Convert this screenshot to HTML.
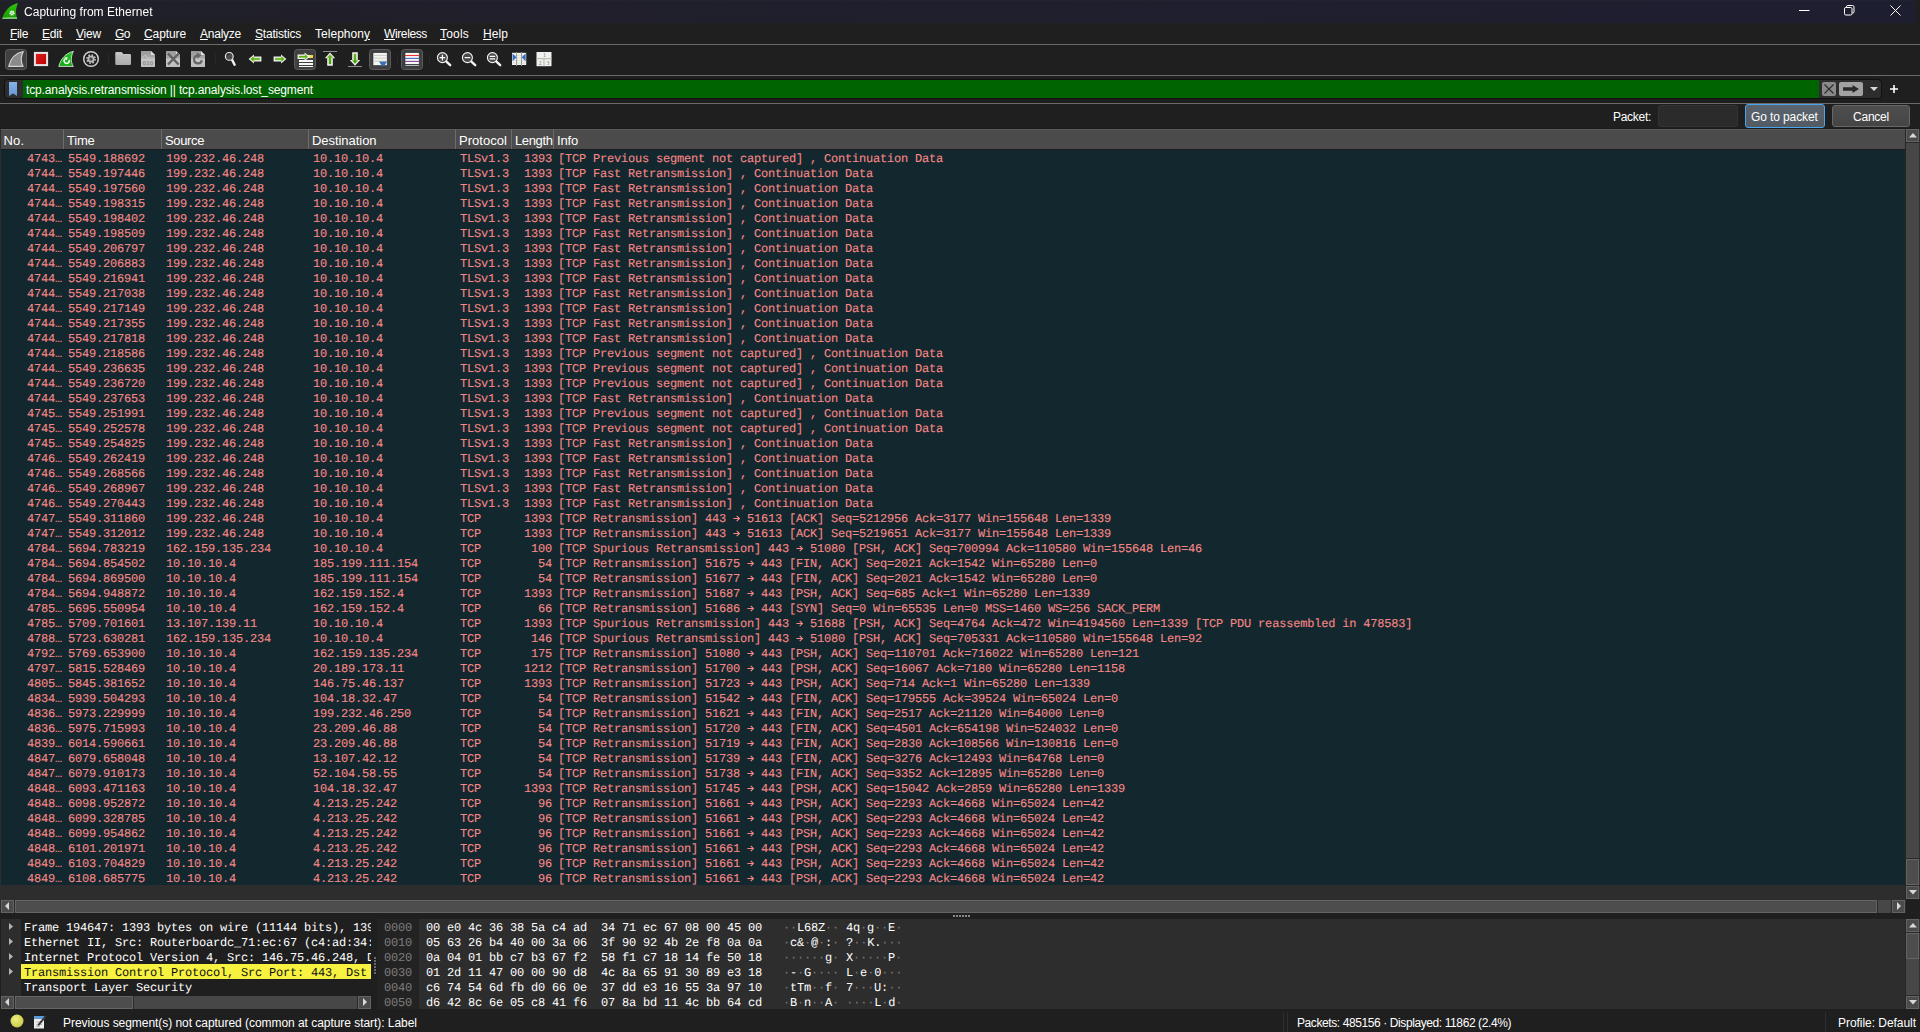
<!DOCTYPE html><html><head><meta charset="utf-8"><title>Capturing from Ethernet</title><style>
html,body{margin:0;padding:0;background:#1f1f1f;}
body{width:1920px;height:1032px;overflow:hidden;position:relative;font-family:"Liberation Sans",sans-serif;}
.b{position:absolute;box-sizing:border-box;}
.t{position:absolute;white-space:pre;font-family:"Liberation Sans",sans-serif;line-height:16px;}
.t u{text-decoration:underline;text-underline-offset:1px;text-decoration-thickness:1px;}
.m{position:absolute;white-space:pre;font-family:"Liberation Mono",monospace;font-size:12px;letter-spacing:-0.2px;line-height:15px;height:15px;text-rendering:geometricPrecision;}
.m b{font-weight:normal;color:#7a7a7a;}
.r{position:absolute;left:1px;width:1905px;height:15px;color:#f78787;}
.r span{-webkit-text-stroke:0.1px #f78787;position:absolute;top:2px;white-space:pre;font-family:"Liberation Mono",monospace;font-size:12px;letter-spacing:-0.2px;line-height:15px;text-rendering:geometricPrecision;}
svg{position:absolute;overflow:visible;}
svg.ar{position:static;display:inline-block;vertical-align:top;}

</style></head><body>
<svg width="0" height="0"><defs><path id="arr" d="M0.4 6.5H6.2M3.7 3.9L6.4 6.5L3.7 9.1" fill="none" stroke="#f78787" stroke-width="1.15"/></defs></svg>
<div class="b" style="left:0px;top:0px;width:1916px;height:23px;background:linear-gradient(90deg,#202027 0%,#201f2b 30%,#1f1f2e 55%,#1e1e31 100%);"></div>
<div class="b" style="left:0px;top:0px;width:1916px;height:1px;background:#23232f;"></div>
<div class="b" style="left:1915px;top:0px;width:1px;height:23px;background:#1f1f26;"></div>
<svg style="left:0;top:0" width="22" height="23" viewBox="0 0 22 23"><defs><linearGradient id="gf" x1="0" y1="0" x2="0" y2="1"><stop offset="0" stop-color="#2ec80e"/><stop offset="0.55" stop-color="#22ac06"/><stop offset="1" stop-color="#1a9a02"/></linearGradient></defs><path d="M2.1 18.9C4.4 11 9.6 5 17.9 3C16 8.2 15.1 12.6 17.3 18.9Z" fill="url(#gf)"/><path d="M2.1 18.9L17.3 18.9L16.8 17.3Q9.5 16.4 2.9 17.6Z" fill="#b6e2b0" opacity="0.6"/><circle cx="12" cy="13" r="2.1" fill="#d6efd2" stroke="#d6efd2" stroke-width="1.4" stroke-dasharray="0.9 0.75"/><circle cx="12" cy="13" r="0.7" fill="#6fc266"/></svg>
<span id="title" class="t" style="left:24px;top:4px;font-size:12px;letter-spacing:0.019px;color:#fff;will-change:transform;">Capturing from Ethernet</span>
<svg style="left:1798px;top:4px" width="104" height="13" viewBox="0 0 104 13" fill="none" stroke="#fff" stroke-width="1"><path d="M1 6.5H11.5"/><rect x="46.5" y="3.5" width="7.5" height="7.5" rx="1.3"/><path d="M48.5 3.5V2.7Q48.5 1.5 49.8 1.5H54.5Q56 1.5 56 3V7.8Q56 9 55 9H54.2"/><path d="M92.5 1.5L102.5 11.5M102.5 1.5L92.5 11.5"/></svg>
<span id="m_File" class="t" style="left:10px;top:26px;font-size:12px;letter-spacing:-0.34px;color:#fff;"><u>F</u>ile</span>
<span id="m_Edit" class="t" style="left:42px;top:26px;font-size:12px;letter-spacing:-0.176px;color:#fff;"><u>E</u>dit</span>
<span id="m_View" class="t" style="left:76px;top:26px;font-size:12px;letter-spacing:-0.203px;color:#fff;"><u>V</u>iew</span>
<span id="m_Go" class="t" style="left:115px;top:26px;font-size:12px;letter-spacing:-0.516px;color:#fff;"><u>G</u>o</span>
<span id="m_Capture" class="t" style="left:144px;top:26px;font-size:12px;letter-spacing:-0.102px;color:#fff;"><u>C</u>apture</span>
<span id="m_Analyze" class="t" style="left:200px;top:26px;font-size:12px;letter-spacing:-0.243px;color:#fff;"><u>A</u>nalyze</span>
<span id="m_Statistics" class="t" style="left:255px;top:26px;font-size:12px;letter-spacing:-0.203px;color:#fff;"><u>S</u>tatistics</span>
<span id="m_Telephony" class="t" style="left:315px;top:26px;font-size:12px;letter-spacing:0.031px;color:#fff;">Telephon<u>y</u></span>
<span id="m_Wireless" class="t" style="left:384px;top:26px;font-size:12px;letter-spacing:-0.377px;color:#fff;"><u>W</u>ireless</span>
<span id="m_Tools" class="t" style="left:440px;top:26px;font-size:12px;letter-spacing:0.194px;color:#fff;"><u>T</u>ools</span>
<span id="m_Help" class="t" style="left:483px;top:26px;font-size:12px;letter-spacing:0.078px;color:#fff;"><u>H</u>elp</span>
<div class="b" style="left:0px;top:44px;width:1920px;height:1px;background:#6a6a6a;"></div>
<div class="b" style="left:0px;top:75px;width:1920px;height:1px;background:#6a6a6a;"></div>
<svg style="left:0;top:45px" width="560" height="30" viewBox="0 45 560 30">
<defs>
<linearGradient id="gr" x1="0" y1="0" x2="1" y2="1"><stop offset="0" stop-color="#e32222"/><stop offset="1" stop-color="#b80000"/></linearGradient>
<linearGradient id="gg" x1="0" y1="0" x2="0" y2="1"><stop offset="0" stop-color="#1fd01f"/><stop offset="1" stop-color="#10a810"/></linearGradient>
<linearGradient id="gfo" x1="0" y1="0" x2="0" y2="1"><stop offset="0" stop-color="#c9c9c9"/><stop offset="1" stop-color="#a9a9a9"/></linearGradient>
<linearGradient id="gfi" x1="0" y1="0" x2="0" y2="1"><stop offset="0" stop-color="#9a9a9a"/><stop offset="0.45" stop-color="#a8a8a8"/><stop offset="0.5" stop-color="#c6c6c6"/><stop offset="1" stop-color="#bdbdbd"/></linearGradient>
<linearGradient id="ga" x1="0" y1="0" x2="0" y2="1"><stop offset="0" stop-color="#6cc21a"/><stop offset="1" stop-color="#3f9a0a"/></linearGradient>
</defs>
<!-- toggled button boxes -->
<g fill="#404040" stroke="#5c5c5c" stroke-width="1">
<rect x="5.5" y="49.5" width="21" height="20" rx="3"/>
<rect x="294.5" y="49.5" width="21" height="20" rx="3"/>
<rect x="369.5" y="49.5" width="21" height="20" rx="3"/>
<rect x="401.5" y="49.5" width="21" height="20" rx="3"/>
</g>
<!-- separators -->
<g stroke="#292929" stroke-width="1"><path d="M108.5 54V65M215.5 54V65M397.5 54V65M429.5 54V65"/></g>
<!-- 1 start capture (grey fin) -->
<path d="M8.7 66.3C10.4 59 15.6 53 23.3 51.5C20.6 56.6 20.3 61.4 23.1 66.3Z" fill="#8a8a8a" stroke="#d4d4d4" stroke-width="1.15" stroke-linejoin="round"/>
<!-- 2 stop -->
<rect x="34.9" y="52.9" width="12.2" height="12.2" fill="url(#gr)" stroke="#e6e6e6" stroke-width="2"/>
<!-- 3 restart (green fin) -->
<path d="M58.8 66.4C60.5 59.2 65.7 53 73.4 51.4C70.7 56.6 70.5 61.6 73.3 66.4Z" fill="url(#gg)" stroke="#dcdcdc" stroke-width="0.9" stroke-linejoin="round"/>
<path d="M69 60A2.5 2.5 0 1 1 65.6 58.6" fill="none" stroke="#f0fff0" stroke-width="1.5"/><path d="M64.4 57.2L67.8 57.2L66.6 60.2Z" fill="#f0fff0"/>
<!-- 4 options (gear) -->
<circle cx="91" cy="59" r="7.3" fill="none" stroke="#d0d0d0" stroke-width="1.5"/>
<circle cx="91" cy="59" r="4.1" fill="none" stroke="#bcbcbc" stroke-width="1.6" stroke-dasharray="1.7 1.52"/>
<circle cx="91" cy="59" r="2.7" fill="#4c4c4c" stroke="#bcbcbc" stroke-width="1.7"/>
<!-- 5 open folder -->
<path d="M115.3 53Q115.3 52 116.3 52H121Q122 52 122.6 53L123.2 54H129.8Q131 54 131 55.2V63.8Q131 65 129.8 65H116.5Q115.3 65 115.3 63.8Z" fill="url(#gfo)"/>
<path d="M115.3 56.2H131" stroke="#b4b4b4" stroke-width="0.6"/>
<!-- 6 save 010 -->
<g id="fileshape"><path d="M141 51H151L155 55V67H141Z" fill="url(#gfi)"/><path d="M151 51V55H155Z" fill="#dcdcdc"/></g>
<path d="M141 58.5L145.5 55L146.3 57.4L150 57.8L155 58.5" fill="none" stroke="#c9c9c9" stroke-width="0.8"/>
<text x="148" y="64.6" font-family="Liberation Sans, sans-serif" font-size="6.2" fill="#8a8a8a" text-anchor="middle" font-weight="bold">010</text>
<!-- 7 close -->
<use href="#fileshape" x="25"/>
<path d="M168 53.5L178.6 64.5M178.6 53.5L168 64.5" stroke="#606060" stroke-width="2.4" fill="none"/>
<!-- 8 reload -->
<use href="#fileshape" x="50"/>
<path d="M201.8 60.2A3.9 3.9 0 1 1 197.9 55.6" fill="none" stroke="#666" stroke-width="2.2"/><path d="M196.6 52.6L201.6 55.2L197.4 58.6Z" fill="#666"/>
<!-- 9 find -->
<path d="M232 59.6L234.6 64.8" stroke="#f2f2f2" stroke-width="2.4" stroke-linecap="round"/>
<circle cx="229.3" cy="56.4" r="3.9" fill="#4c4c4c" stroke="#f2f2f2" stroke-width="1.1"/>
<path d="M227 55.4A2.4 2.4 0 0 1 229.6 53.9" stroke="#2a2a2a" stroke-width="1.2" fill="none"/>
<!-- 10 prev / 11 next -->
<path d="M248.6 59L254 54.4V56.6H261.4V61.4H254V63.6Z" fill="#f4f4f4"/><path d="M250.6 59L253.4 56.6V58.2H259.8V59.8H253.4V61.4Z" fill="#5db213" stroke="#5db213" stroke-width="0.5"/>
<path d="M286.4 59L281 54.4V56.6H273.6V61.4H281V63.6Z" fill="#f4f4f4"/><path d="M284.4 59L281.6 56.6V58.2H275.2V59.8H281.6V61.4Z" fill="#5db213" stroke="#5db213" stroke-width="0.5"/>
<!-- 12 go to -->
<g fill="#f6f6f6"><rect x="299" y="55" width="14" height="3"/><rect x="299" y="60" width="14" height="2"/><rect x="299" y="63" width="14" height="2"/><rect x="299" y="66" width="14" height="1"/></g>
<rect x="309.4" y="55" width="3.6" height="3" fill="#f2dc3c"/>
<path d="M309.8 56.8L304.6 52.6V54.6H297.6V59H304.6V61Z" fill="#f4f4f4"/><path d="M307.8 56.8L305.2 54.6V56H299V57.6H305.2V59Z" fill="#5db213" stroke="#5db213" stroke-width="0.4"/>
<!-- 13 first -->
<path d="M323 51.5H337" stroke="#8c8c8c" stroke-width="1"/>
<path d="M330 52.4L335.2 58.2H332.8V65.8H327.2V58.2H324.8Z" fill="#f4f4f4"/><path d="M330 54.6L332.6 57.6H331V64H329V57.6H327.4Z" fill="url(#ga)" stroke="#55ad10" stroke-width="0.5"/>
<!-- 14 last -->
<path d="M348 66.5H362" stroke="#8c8c8c" stroke-width="1"/>
<path d="M355 65.8L360.2 60H357.8V52.2H352.2V60H349.8Z" fill="#f4f4f4"/><path d="M355 63.6L357.6 60.6H356V54H354V60.6H352.4Z" fill="url(#ga)" stroke="#55ad10" stroke-width="0.5"/>
<!-- 15 autoscroll -->
<rect x="373" y="52.6" width="14.2" height="13" fill="#f4f4f0" stroke="#202a30" stroke-width="0.6"/>
<path d="M373 55.4H387M373 58.2H387M373 61.2H387" stroke="#c4c4bc" stroke-width="0.8"/>
<path d="M379 61.4H387.2L384.3 65.8H381.9Z" fill="#3a6fb8"/>
<!-- 16 colorize -->
<rect x="405" y="52.6" width="14.2" height="13.4" fill="#f8f8f6" stroke="#202a30" stroke-width="0.6"/>
<path d="M405 55.5H419.2" stroke="#f03030" stroke-width="1.1"/><path d="M405 58.4H419.2" stroke="#3c6cc4" stroke-width="1.1"/><path d="M405 61.4H419.2" stroke="#80449a" stroke-width="1.1"/><path d="M405 64.5H419.2" stroke="#283038" stroke-width="0.9"/>
<!-- 17/18/19 zoom -->
<g id="mag"><path d="M446.4 61.6L450.2 65.2" stroke="#f4f4f4" stroke-width="2.4" stroke-linecap="round"/><circle cx="442.4" cy="57.6" r="5" fill="#4a4a4a" stroke="#f4f4f4" stroke-width="1.1"/></g>
<path d="M439.6 57.6H445.2M442.4 54.8V60.4" stroke="#fff" stroke-width="1.2"/>
<use href="#mag" x="25"/><path d="M464.6 57.6H470.2" stroke="#fff" stroke-width="1.2"/>
<use href="#mag" x="50"/><path d="M489.6 56.4H495.2M489.6 58.8H495.2" stroke="#fff" stroke-width="1.2"/>
<!-- 20 resize columns -->
<rect x="512" y="52.8" width="14.2" height="12.2" fill="#f2f2ee"/>
<path d="M512 55.5H526.2M512 58H526.2M512 60.5H526.2M512 63H526.2" stroke="#d0d0c8" stroke-width="0.6"/>
<path d="M516.6 52V66M521.5 52V66" stroke="#9a9a94" stroke-width="1"/>
<path d="M512.6 53.4L516.4 57.3L512.6 61.2Z" fill="#2f6bc0"/><path d="M525.6 53.4L521.8 57.3L525.6 61.2Z" fill="#2f6bc0"/>
<!-- 21 layout -->
<rect x="536.5" y="52" width="15" height="14.2" fill="#f0f0ee"/>
<path d="M536.5 58.6H551.5M544 58.6V66.2" stroke="#bcbcb8" stroke-width="1.2"/>
<g font-family="Liberation Serif, serif" font-size="5.8" fill="#7c7c7c" text-anchor="middle"><text x="544.4" y="57.4">1</text><text x="540.3" y="64.8">2</text><text x="548" y="64.8">3</text></g>
</svg>

<div class="b" style="left:4px;top:79px;width:1878px;height:20px;background:#2d2d2d;border:1px solid #101010;border-radius:4px;"></div>
<div class="b" style="left:23px;top:80px;width:1796px;height:18px;background:#006400;"></div>
<svg style="left:9px;top:82px" width="8" height="14" viewBox="0 0 8 14"><defs><linearGradient id="bk" x1="0" y1="0" x2="0" y2="1"><stop offset="0" stop-color="#86b2e8"/><stop offset="1" stop-color="#6596d6"/></linearGradient></defs><path d="M0 0H8V14L4 11.4L0 14Z" fill="url(#bk)"/></svg>
<span id="filter" class="t" style="left:26px;top:82px;font-size:12px;letter-spacing:-0.131px;color:#fff;">tcp.analysis.retransmission || tcp.analysis.lost_segment</span>
<div class="b" style="left:1822px;top:82px;width:14px;height:14px;background:#8a8a8a;border-radius:2px;"></div>
<svg style="left:1822px;top:82px" width="14" height="14" viewBox="0 0 14 14"><path d="M2.5 2.5L11.5 11.5M11.5 2.5L2.5 11.5" stroke="#2a2a2a" stroke-width="1.1" fill="none"/></svg>
<div class="b" style="left:1839px;top:82px;width:24px;height:14px;background:#a2a2a2;border-radius:2px;"></div>
<svg style="left:1839px;top:82px" width="24" height="14" viewBox="0 0 24 14"><path d="M4 5.2H13.5V3L20 7L13.5 11V8.8H4Z" fill="#2a2a2a"/></svg>
<svg style="left:1870px;top:87px" width="8" height="4" viewBox="0 0 8 4"><path d="M0 0H8L4 4Z" fill="#d8d8d8"/></svg>
<svg style="left:1890px;top:85px" width="8" height="8" viewBox="0 0 8 8"><path d="M4 0V8M0 4H8" stroke="#fff" stroke-width="1.6"/></svg>
<div class="b" style="left:0px;top:103px;width:1920px;height:1px;background:#6a6a6a;"></div>
<span id="packetlbl" class="t" style="left:1613px;top:109px;font-size:12px;letter-spacing:-0.29px;color:#fff;">Packet:</span>
<div class="b" style="left:1658px;top:105px;width:80px;height:22px;background:#2b2b2b;border:1px solid #323232;border-radius:2px;"></div>
<div class="b" style="left:1745px;top:104px;width:80px;height:24px;background:linear-gradient(#5a646e,#525b64);border:1px solid #4aa5ee;border-radius:3px;"></div>
<span id="gotobtn" class="t" style="left:1751px;top:109px;font-size:12px;letter-spacing:-0.112px;color:#fff;">Go to packet</span>
<div class="b" style="left:1832px;top:105px;width:78px;height:22px;background:linear-gradient(#4e4e4e,#454545);border:1px solid #676767;border-radius:3px;"></div>
<span id="cancelbtn" class="t" style="left:1853px;top:109px;font-size:12px;letter-spacing:-0.227px;color:#fff;">Cancel</span>
<div class="b" style="left:0px;top:129px;width:1920px;height:784px;background:#2d2d2d;"></div>
<div class="b" style="left:0px;top:128px;width:1920px;height:1px;background:#1b1b1b;"></div>
<div class="b" style="left:1px;top:129px;width:1904px;height:20px;background:#4b4b4b;"></div>
<div class="b" style="left:1px;top:129px;width:1904px;height:1px;background:#5c5c5c;"></div>
<div class="b" style="left:1px;top:149px;width:1904px;height:1px;background:#1a1a1a;"></div>
<span id="h_No" class="t" style="left:3.5px;top:133px;font-size:13px;letter-spacing:0.187px;color:#fff;">No.</span>
<span id="h_Time" class="t" style="left:67px;top:133px;font-size:13px;letter-spacing:-0.227px;color:#fff;">Time</span>
<span id="h_Source" class="t" style="left:165px;top:133px;font-size:13px;letter-spacing:-0.367px;color:#fff;">Source</span>
<span id="h_Destination" class="t" style="left:312px;top:133px;font-size:13px;letter-spacing:-0.05px;color:#fff;">Destination</span>
<span id="h_Protocol" class="t" style="left:459px;top:133px;font-size:13px;letter-spacing:0.037px;color:#fff;">Protocol</span>
<span id="h_Length" class="t" style="left:515px;top:133px;font-size:13px;letter-spacing:-0.361px;color:#fff;">Length</span>
<span id="h_Info" class="t" style="left:557px;top:133px;font-size:13px;letter-spacing:-0.172px;color:#fff;">Info</span>
<div class="b" style="left:63px;top:129px;width:1px;height:20px;background:#6c6c6c;"></div>
<div class="b" style="left:161px;top:129px;width:1px;height:20px;background:#6c6c6c;"></div>
<div class="b" style="left:308px;top:129px;width:1px;height:20px;background:#6c6c6c;"></div>
<div class="b" style="left:455px;top:129px;width:1px;height:20px;background:#6c6c6c;"></div>
<div class="b" style="left:511px;top:129px;width:1px;height:20px;background:#6c6c6c;"></div>
<div class="b" style="left:553px;top:129px;width:1px;height:20px;background:#6c6c6c;"></div>
<div class="b" style="left:1px;top:150px;width:1904px;height:735px;background:#12272e;"></div>
<div class="r" style="top:150px"><span style="right:1844px">4743…</span><span style="left:67px">5549.188692</span><span style="left:165px">199.232.46.248</span><span style="left:312px">10.10.10.4</span><span style="left:459px">TLSv1.3</span><span style="right:1354px">1393</span><span style="left:557px">[TCP Previous segment not captured] , Continuation Data</span></div>
<div class="r" style="top:165px"><span style="right:1844px">4744…</span><span style="left:67px">5549.197446</span><span style="left:165px">199.232.46.248</span><span style="left:312px">10.10.10.4</span><span style="left:459px">TLSv1.3</span><span style="right:1354px">1393</span><span style="left:557px">[TCP Fast Retransmission] , Continuation Data</span></div>
<div class="r" style="top:180px"><span style="right:1844px">4744…</span><span style="left:67px">5549.197560</span><span style="left:165px">199.232.46.248</span><span style="left:312px">10.10.10.4</span><span style="left:459px">TLSv1.3</span><span style="right:1354px">1393</span><span style="left:557px">[TCP Fast Retransmission] , Continuation Data</span></div>
<div class="r" style="top:195px"><span style="right:1844px">4744…</span><span style="left:67px">5549.198315</span><span style="left:165px">199.232.46.248</span><span style="left:312px">10.10.10.4</span><span style="left:459px">TLSv1.3</span><span style="right:1354px">1393</span><span style="left:557px">[TCP Fast Retransmission] , Continuation Data</span></div>
<div class="r" style="top:210px"><span style="right:1844px">4744…</span><span style="left:67px">5549.198402</span><span style="left:165px">199.232.46.248</span><span style="left:312px">10.10.10.4</span><span style="left:459px">TLSv1.3</span><span style="right:1354px">1393</span><span style="left:557px">[TCP Fast Retransmission] , Continuation Data</span></div>
<div class="r" style="top:225px"><span style="right:1844px">4744…</span><span style="left:67px">5549.198509</span><span style="left:165px">199.232.46.248</span><span style="left:312px">10.10.10.4</span><span style="left:459px">TLSv1.3</span><span style="right:1354px">1393</span><span style="left:557px">[TCP Fast Retransmission] , Continuation Data</span></div>
<div class="r" style="top:240px"><span style="right:1844px">4744…</span><span style="left:67px">5549.206797</span><span style="left:165px">199.232.46.248</span><span style="left:312px">10.10.10.4</span><span style="left:459px">TLSv1.3</span><span style="right:1354px">1393</span><span style="left:557px">[TCP Fast Retransmission] , Continuation Data</span></div>
<div class="r" style="top:255px"><span style="right:1844px">4744…</span><span style="left:67px">5549.206883</span><span style="left:165px">199.232.46.248</span><span style="left:312px">10.10.10.4</span><span style="left:459px">TLSv1.3</span><span style="right:1354px">1393</span><span style="left:557px">[TCP Fast Retransmission] , Continuation Data</span></div>
<div class="r" style="top:270px"><span style="right:1844px">4744…</span><span style="left:67px">5549.216941</span><span style="left:165px">199.232.46.248</span><span style="left:312px">10.10.10.4</span><span style="left:459px">TLSv1.3</span><span style="right:1354px">1393</span><span style="left:557px">[TCP Fast Retransmission] , Continuation Data</span></div>
<div class="r" style="top:285px"><span style="right:1844px">4744…</span><span style="left:67px">5549.217038</span><span style="left:165px">199.232.46.248</span><span style="left:312px">10.10.10.4</span><span style="left:459px">TLSv1.3</span><span style="right:1354px">1393</span><span style="left:557px">[TCP Fast Retransmission] , Continuation Data</span></div>
<div class="r" style="top:300px"><span style="right:1844px">4744…</span><span style="left:67px">5549.217149</span><span style="left:165px">199.232.46.248</span><span style="left:312px">10.10.10.4</span><span style="left:459px">TLSv1.3</span><span style="right:1354px">1393</span><span style="left:557px">[TCP Fast Retransmission] , Continuation Data</span></div>
<div class="r" style="top:315px"><span style="right:1844px">4744…</span><span style="left:67px">5549.217355</span><span style="left:165px">199.232.46.248</span><span style="left:312px">10.10.10.4</span><span style="left:459px">TLSv1.3</span><span style="right:1354px">1393</span><span style="left:557px">[TCP Fast Retransmission] , Continuation Data</span></div>
<div class="r" style="top:330px"><span style="right:1844px">4744…</span><span style="left:67px">5549.217818</span><span style="left:165px">199.232.46.248</span><span style="left:312px">10.10.10.4</span><span style="left:459px">TLSv1.3</span><span style="right:1354px">1393</span><span style="left:557px">[TCP Fast Retransmission] , Continuation Data</span></div>
<div class="r" style="top:345px"><span style="right:1844px">4744…</span><span style="left:67px">5549.218586</span><span style="left:165px">199.232.46.248</span><span style="left:312px">10.10.10.4</span><span style="left:459px">TLSv1.3</span><span style="right:1354px">1393</span><span style="left:557px">[TCP Previous segment not captured] , Continuation Data</span></div>
<div class="r" style="top:360px"><span style="right:1844px">4744…</span><span style="left:67px">5549.236635</span><span style="left:165px">199.232.46.248</span><span style="left:312px">10.10.10.4</span><span style="left:459px">TLSv1.3</span><span style="right:1354px">1393</span><span style="left:557px">[TCP Previous segment not captured] , Continuation Data</span></div>
<div class="r" style="top:375px"><span style="right:1844px">4744…</span><span style="left:67px">5549.236720</span><span style="left:165px">199.232.46.248</span><span style="left:312px">10.10.10.4</span><span style="left:459px">TLSv1.3</span><span style="right:1354px">1393</span><span style="left:557px">[TCP Previous segment not captured] , Continuation Data</span></div>
<div class="r" style="top:390px"><span style="right:1844px">4744…</span><span style="left:67px">5549.237653</span><span style="left:165px">199.232.46.248</span><span style="left:312px">10.10.10.4</span><span style="left:459px">TLSv1.3</span><span style="right:1354px">1393</span><span style="left:557px">[TCP Fast Retransmission] , Continuation Data</span></div>
<div class="r" style="top:405px"><span style="right:1844px">4745…</span><span style="left:67px">5549.251991</span><span style="left:165px">199.232.46.248</span><span style="left:312px">10.10.10.4</span><span style="left:459px">TLSv1.3</span><span style="right:1354px">1393</span><span style="left:557px">[TCP Previous segment not captured] , Continuation Data</span></div>
<div class="r" style="top:420px"><span style="right:1844px">4745…</span><span style="left:67px">5549.252578</span><span style="left:165px">199.232.46.248</span><span style="left:312px">10.10.10.4</span><span style="left:459px">TLSv1.3</span><span style="right:1354px">1393</span><span style="left:557px">[TCP Previous segment not captured] , Continuation Data</span></div>
<div class="r" style="top:435px"><span style="right:1844px">4745…</span><span style="left:67px">5549.254825</span><span style="left:165px">199.232.46.248</span><span style="left:312px">10.10.10.4</span><span style="left:459px">TLSv1.3</span><span style="right:1354px">1393</span><span style="left:557px">[TCP Fast Retransmission] , Continuation Data</span></div>
<div class="r" style="top:450px"><span style="right:1844px">4746…</span><span style="left:67px">5549.262419</span><span style="left:165px">199.232.46.248</span><span style="left:312px">10.10.10.4</span><span style="left:459px">TLSv1.3</span><span style="right:1354px">1393</span><span style="left:557px">[TCP Fast Retransmission] , Continuation Data</span></div>
<div class="r" style="top:465px"><span style="right:1844px">4746…</span><span style="left:67px">5549.268566</span><span style="left:165px">199.232.46.248</span><span style="left:312px">10.10.10.4</span><span style="left:459px">TLSv1.3</span><span style="right:1354px">1393</span><span style="left:557px">[TCP Fast Retransmission] , Continuation Data</span></div>
<div class="r" style="top:480px"><span style="right:1844px">4746…</span><span style="left:67px">5549.268967</span><span style="left:165px">199.232.46.248</span><span style="left:312px">10.10.10.4</span><span style="left:459px">TLSv1.3</span><span style="right:1354px">1393</span><span style="left:557px">[TCP Fast Retransmission] , Continuation Data</span></div>
<div class="r" style="top:495px"><span style="right:1844px">4746…</span><span style="left:67px">5549.270443</span><span style="left:165px">199.232.46.248</span><span style="left:312px">10.10.10.4</span><span style="left:459px">TLSv1.3</span><span style="right:1354px">1393</span><span style="left:557px">[TCP Fast Retransmission] , Continuation Data</span></div>
<div class="r" style="top:510px"><span style="right:1844px">4747…</span><span style="left:67px">5549.311860</span><span style="left:165px">199.232.46.248</span><span style="left:312px">10.10.10.4</span><span style="left:459px">TCP</span><span style="right:1354px">1393</span><span style="left:557px">[TCP Retransmission] 443 <svg class="ar" width="7" height="15"><use href="#arr"/></svg> 51613 [ACK] Seq=5212956 Ack=3177 Win=155648 Len=1339</span></div>
<div class="r" style="top:525px"><span style="right:1844px">4747…</span><span style="left:67px">5549.312012</span><span style="left:165px">199.232.46.248</span><span style="left:312px">10.10.10.4</span><span style="left:459px">TCP</span><span style="right:1354px">1393</span><span style="left:557px">[TCP Retransmission] 443 <svg class="ar" width="7" height="15"><use href="#arr"/></svg> 51613 [ACK] Seq=5219651 Ack=3177 Win=155648 Len=1339</span></div>
<div class="r" style="top:540px"><span style="right:1844px">4784…</span><span style="left:67px">5694.783219</span><span style="left:165px">162.159.135.234</span><span style="left:312px">10.10.10.4</span><span style="left:459px">TCP</span><span style="right:1354px">100</span><span style="left:557px">[TCP Spurious Retransmission] 443 <svg class="ar" width="7" height="15"><use href="#arr"/></svg> 51080 [PSH, ACK] Seq=700994 Ack=110580 Win=155648 Len=46</span></div>
<div class="r" style="top:555px"><span style="right:1844px">4784…</span><span style="left:67px">5694.854502</span><span style="left:165px">10.10.10.4</span><span style="left:312px">185.199.111.154</span><span style="left:459px">TCP</span><span style="right:1354px">54</span><span style="left:557px">[TCP Retransmission] 51675 <svg class="ar" width="7" height="15"><use href="#arr"/></svg> 443 [FIN, ACK] Seq=2021 Ack=1542 Win=65280 Len=0</span></div>
<div class="r" style="top:570px"><span style="right:1844px">4784…</span><span style="left:67px">5694.869500</span><span style="left:165px">10.10.10.4</span><span style="left:312px">185.199.111.154</span><span style="left:459px">TCP</span><span style="right:1354px">54</span><span style="left:557px">[TCP Retransmission] 51677 <svg class="ar" width="7" height="15"><use href="#arr"/></svg> 443 [FIN, ACK] Seq=2021 Ack=1542 Win=65280 Len=0</span></div>
<div class="r" style="top:585px"><span style="right:1844px">4784…</span><span style="left:67px">5694.948872</span><span style="left:165px">10.10.10.4</span><span style="left:312px">162.159.152.4</span><span style="left:459px">TCP</span><span style="right:1354px">1393</span><span style="left:557px">[TCP Retransmission] 51687 <svg class="ar" width="7" height="15"><use href="#arr"/></svg> 443 [PSH, ACK] Seq=685 Ack=1 Win=65280 Len=1339</span></div>
<div class="r" style="top:600px"><span style="right:1844px">4785…</span><span style="left:67px">5695.550954</span><span style="left:165px">10.10.10.4</span><span style="left:312px">162.159.152.4</span><span style="left:459px">TCP</span><span style="right:1354px">66</span><span style="left:557px">[TCP Retransmission] 51686 <svg class="ar" width="7" height="15"><use href="#arr"/></svg> 443 [SYN] Seq=0 Win=65535 Len=0 MSS=1460 WS=256 SACK_PERM</span></div>
<div class="r" style="top:615px"><span style="right:1844px">4785…</span><span style="left:67px">5709.701601</span><span style="left:165px">13.107.139.11</span><span style="left:312px">10.10.10.4</span><span style="left:459px">TCP</span><span style="right:1354px">1393</span><span style="left:557px">[TCP Spurious Retransmission] 443 <svg class="ar" width="7" height="15"><use href="#arr"/></svg> 51688 [PSH, ACK] Seq=4764 Ack=472 Win=4194560 Len=1339 [TCP PDU reassembled in 478583]</span></div>
<div class="r" style="top:630px"><span style="right:1844px">4788…</span><span style="left:67px">5723.630281</span><span style="left:165px">162.159.135.234</span><span style="left:312px">10.10.10.4</span><span style="left:459px">TCP</span><span style="right:1354px">146</span><span style="left:557px">[TCP Spurious Retransmission] 443 <svg class="ar" width="7" height="15"><use href="#arr"/></svg> 51080 [PSH, ACK] Seq=705331 Ack=110580 Win=155648 Len=92</span></div>
<div class="r" style="top:645px"><span style="right:1844px">4792…</span><span style="left:67px">5769.653900</span><span style="left:165px">10.10.10.4</span><span style="left:312px">162.159.135.234</span><span style="left:459px">TCP</span><span style="right:1354px">175</span><span style="left:557px">[TCP Retransmission] 51080 <svg class="ar" width="7" height="15"><use href="#arr"/></svg> 443 [PSH, ACK] Seq=110701 Ack=716022 Win=65280 Len=121</span></div>
<div class="r" style="top:660px"><span style="right:1844px">4797…</span><span style="left:67px">5815.528469</span><span style="left:165px">10.10.10.4</span><span style="left:312px">20.189.173.11</span><span style="left:459px">TCP</span><span style="right:1354px">1212</span><span style="left:557px">[TCP Retransmission] 51700 <svg class="ar" width="7" height="15"><use href="#arr"/></svg> 443 [PSH, ACK] Seq=16067 Ack=7180 Win=65280 Len=1158</span></div>
<div class="r" style="top:675px"><span style="right:1844px">4805…</span><span style="left:67px">5845.381652</span><span style="left:165px">10.10.10.4</span><span style="left:312px">146.75.46.137</span><span style="left:459px">TCP</span><span style="right:1354px">1393</span><span style="left:557px">[TCP Retransmission] 51723 <svg class="ar" width="7" height="15"><use href="#arr"/></svg> 443 [PSH, ACK] Seq=714 Ack=1 Win=65280 Len=1339</span></div>
<div class="r" style="top:690px"><span style="right:1844px">4834…</span><span style="left:67px">5939.504293</span><span style="left:165px">10.10.10.4</span><span style="left:312px">104.18.32.47</span><span style="left:459px">TCP</span><span style="right:1354px">54</span><span style="left:557px">[TCP Retransmission] 51542 <svg class="ar" width="7" height="15"><use href="#arr"/></svg> 443 [FIN, ACK] Seq=179555 Ack=39524 Win=65024 Len=0</span></div>
<div class="r" style="top:705px"><span style="right:1844px">4836…</span><span style="left:67px">5973.229999</span><span style="left:165px">10.10.10.4</span><span style="left:312px">199.232.46.250</span><span style="left:459px">TCP</span><span style="right:1354px">54</span><span style="left:557px">[TCP Retransmission] 51621 <svg class="ar" width="7" height="15"><use href="#arr"/></svg> 443 [FIN, ACK] Seq=2517 Ack=21120 Win=64000 Len=0</span></div>
<div class="r" style="top:720px"><span style="right:1844px">4836…</span><span style="left:67px">5975.715993</span><span style="left:165px">10.10.10.4</span><span style="left:312px">23.209.46.88</span><span style="left:459px">TCP</span><span style="right:1354px">54</span><span style="left:557px">[TCP Retransmission] 51720 <svg class="ar" width="7" height="15"><use href="#arr"/></svg> 443 [FIN, ACK] Seq=4501 Ack=654198 Win=524032 Len=0</span></div>
<div class="r" style="top:735px"><span style="right:1844px">4839…</span><span style="left:67px">6014.590661</span><span style="left:165px">10.10.10.4</span><span style="left:312px">23.209.46.88</span><span style="left:459px">TCP</span><span style="right:1354px">54</span><span style="left:557px">[TCP Retransmission] 51719 <svg class="ar" width="7" height="15"><use href="#arr"/></svg> 443 [FIN, ACK] Seq=2830 Ack=108566 Win=130816 Len=0</span></div>
<div class="r" style="top:750px"><span style="right:1844px">4847…</span><span style="left:67px">6079.658048</span><span style="left:165px">10.10.10.4</span><span style="left:312px">13.107.42.12</span><span style="left:459px">TCP</span><span style="right:1354px">54</span><span style="left:557px">[TCP Retransmission] 51739 <svg class="ar" width="7" height="15"><use href="#arr"/></svg> 443 [FIN, ACK] Seq=3276 Ack=12493 Win=64768 Len=0</span></div>
<div class="r" style="top:765px"><span style="right:1844px">4847…</span><span style="left:67px">6079.910173</span><span style="left:165px">10.10.10.4</span><span style="left:312px">52.104.58.55</span><span style="left:459px">TCP</span><span style="right:1354px">54</span><span style="left:557px">[TCP Retransmission] 51738 <svg class="ar" width="7" height="15"><use href="#arr"/></svg> 443 [FIN, ACK] Seq=3352 Ack=12895 Win=65280 Len=0</span></div>
<div class="r" style="top:780px"><span style="right:1844px">4848…</span><span style="left:67px">6093.471163</span><span style="left:165px">10.10.10.4</span><span style="left:312px">104.18.32.47</span><span style="left:459px">TCP</span><span style="right:1354px">1393</span><span style="left:557px">[TCP Retransmission] 51745 <svg class="ar" width="7" height="15"><use href="#arr"/></svg> 443 [PSH, ACK] Seq=15042 Ack=2859 Win=65280 Len=1339</span></div>
<div class="r" style="top:795px"><span style="right:1844px">4848…</span><span style="left:67px">6098.952872</span><span style="left:165px">10.10.10.4</span><span style="left:312px">4.213.25.242</span><span style="left:459px">TCP</span><span style="right:1354px">96</span><span style="left:557px">[TCP Retransmission] 51661 <svg class="ar" width="7" height="15"><use href="#arr"/></svg> 443 [PSH, ACK] Seq=2293 Ack=4668 Win=65024 Len=42</span></div>
<div class="r" style="top:810px"><span style="right:1844px">4848…</span><span style="left:67px">6099.328785</span><span style="left:165px">10.10.10.4</span><span style="left:312px">4.213.25.242</span><span style="left:459px">TCP</span><span style="right:1354px">96</span><span style="left:557px">[TCP Retransmission] 51661 <svg class="ar" width="7" height="15"><use href="#arr"/></svg> 443 [PSH, ACK] Seq=2293 Ack=4668 Win=65024 Len=42</span></div>
<div class="r" style="top:825px"><span style="right:1844px">4848…</span><span style="left:67px">6099.954862</span><span style="left:165px">10.10.10.4</span><span style="left:312px">4.213.25.242</span><span style="left:459px">TCP</span><span style="right:1354px">96</span><span style="left:557px">[TCP Retransmission] 51661 <svg class="ar" width="7" height="15"><use href="#arr"/></svg> 443 [PSH, ACK] Seq=2293 Ack=4668 Win=65024 Len=42</span></div>
<div class="r" style="top:840px"><span style="right:1844px">4848…</span><span style="left:67px">6101.201971</span><span style="left:165px">10.10.10.4</span><span style="left:312px">4.213.25.242</span><span style="left:459px">TCP</span><span style="right:1354px">96</span><span style="left:557px">[TCP Retransmission] 51661 <svg class="ar" width="7" height="15"><use href="#arr"/></svg> 443 [PSH, ACK] Seq=2293 Ack=4668 Win=65024 Len=42</span></div>
<div class="r" style="top:855px"><span style="right:1844px">4849…</span><span style="left:67px">6103.704829</span><span style="left:165px">10.10.10.4</span><span style="left:312px">4.213.25.242</span><span style="left:459px">TCP</span><span style="right:1354px">96</span><span style="left:557px">[TCP Retransmission] 51661 <svg class="ar" width="7" height="15"><use href="#arr"/></svg> 443 [PSH, ACK] Seq=2293 Ack=4668 Win=65024 Len=42</span></div>
<div class="r" style="top:870px"><span style="right:1844px">4849…</span><span style="left:67px">6108.685775</span><span style="left:165px">10.10.10.4</span><span style="left:312px">4.213.25.242</span><span style="left:459px">TCP</span><span style="right:1354px">96</span><span style="left:557px">[TCP Retransmission] 51661 <svg class="ar" width="7" height="15"><use href="#arr"/></svg> 443 [PSH, ACK] Seq=2293 Ack=4668 Win=65024 Len=42</span></div>
<div class="b" style="left:1905px;top:129px;width:1px;height:770px;background:#262626;"></div>
<div class="b" style="left:1906px;top:129px;width:13px;height:770px;background:#474747;"></div>
<div class="b" style="left:1919px;top:129px;width:1px;height:770px;background:#303030;"></div>
<div class="b" style="left:1906px;top:129px;width:13px;height:13px;background:#4b4b4b;border:1px solid #636363;"></div>
<div class="b" style="left:1906px;top:142px;width:13px;height:1px;background:#2a2a2a;"></div>
<svg style="left:1908.5px;top:133px" width="8" height="4.4" viewBox="0 0 8 4.4"><path d="M0 4.4L4 0L8 4.4Z" fill="#d8d8d8"/></svg>
<div class="b" style="left:1906px;top:886px;width:13px;height:13px;background:#4b4b4b;border:1px solid #636363;"></div>
<div class="b" style="left:1906px;top:885px;width:13px;height:1px;background:#2a2a2a;"></div>
<svg style="left:1908.5px;top:890px" width="8" height="4.4" viewBox="0 0 8 4.4"><path d="M0 0L4 4.4L8 0Z" fill="#d8d8d8"/></svg>
<div class="b" style="left:1906px;top:858px;width:13px;height:1px;background:#2a2a2a;"></div>
<div class="b" style="left:1906px;top:859px;width:13px;height:26px;background:#4d4d4d;border:1px solid #646464;"></div>
<div class="b" style="left:1px;top:900px;width:1904px;height:13px;background:#474747;"></div>
<div class="b" style="left:1px;top:900px;width:13px;height:13px;background:#4b4b4b;border:1px solid #636363;"></div>
<div class="b" style="left:14px;top:900px;width:1px;height:13px;background:#2a2a2a;"></div>
<svg style="left:5px;top:902px" width="4" height="8" viewBox="0 0 4 8"><path d="M4 0L0 4L4 8Z" fill="#d8d8d8"/></svg>
<div class="b" style="left:1892px;top:900px;width:13px;height:13px;background:#4b4b4b;border:1px solid #636363;"></div>
<div class="b" style="left:1891px;top:900px;width:1px;height:13px;background:#2a2a2a;"></div>
<svg style="left:1896.5px;top:902px" width="4" height="8" viewBox="0 0 4 8"><path d="M0 0L4 4L0 8Z" fill="#d8d8d8"/></svg>
<div class="b" style="left:14px;top:900px;width:1px;height:13px;background:#2a2a2a;"></div>
<div class="b" style="left:1877px;top:900px;width:1px;height:13px;background:#2a2a2a;"></div>
<div class="b" style="left:15px;top:900px;width:1862px;height:13px;background:#4d4d4d;border:1px solid #646464;"></div>
<div class="b" style="left:1906px;top:899px;width:14px;height:14px;background:#1f1f1f;"></div>
<div class="b" style="left:0px;top:913px;width:1920px;height:6px;background:#1f1f1f;"></div>
<div class="b" style="left:953px;top:915px;width:2px;height:2px;background:#8a8a8a;"></div>
<div class="b" style="left:956px;top:915px;width:2px;height:2px;background:#8a8a8a;"></div>
<div class="b" style="left:959px;top:915px;width:2px;height:2px;background:#8a8a8a;"></div>
<div class="b" style="left:962px;top:915px;width:2px;height:2px;background:#8a8a8a;"></div>
<div class="b" style="left:965px;top:915px;width:2px;height:2px;background:#8a8a8a;"></div>
<div class="b" style="left:968px;top:915px;width:2px;height:2px;background:#8a8a8a;"></div>
<div class="b" style="left:1px;top:919px;width:370px;height:90px;background:#2d2d2d;"></div>
<div class="b" style="left:21px;top:919px;width:350px;height:77px;background:#1f1f1f;"></div>
<div class="b" style="left:21px;top:964px;width:350px;height:15px;background:#f7f240;"></div>
<div class="b" style="left:21px;top:919px;width:350px;height:77px;overflow:hidden;">
<span class="m" style="left:3px;top:2px;color:#fff">Frame 194647: 1393 bytes on wire (11144 bits), 1393 bytes captured</span>
<span class="m" style="left:3px;top:17px;color:#fff">Ethernet II, Src: Routerboardc_71:ec:67 (c4:ad:34:71:ec:67), Dst:</span>
<span class="m" style="left:3px;top:32px;color:#fff">Internet Protocol Version 4, Src: 146.75.46.248, Dst: 10.10.10.4</span>
<span class="m" style="left:3px;top:47px;color:#111">Transmission Control Protocol, Src Port: 443, Dst Port: 51613, Seq</span>
<span class="m" style="left:3px;top:62px;color:#fff">Transport Layer Security</span>
</div>
<svg style="left:9px;top:923px" width="4" height="7" viewBox="0 0 4 7"><path d="M0 0L4 3.5L0 7Z" fill="#b4b4b4"/></svg>
<svg style="left:9px;top:938px" width="4" height="7" viewBox="0 0 4 7"><path d="M0 0L4 3.5L0 7Z" fill="#b4b4b4"/></svg>
<svg style="left:9px;top:953px" width="4" height="7" viewBox="0 0 4 7"><path d="M0 0L4 3.5L0 7Z" fill="#b4b4b4"/></svg>
<svg style="left:9px;top:968px" width="4" height="7" viewBox="0 0 4 7"><path d="M0 0L4 3.5L0 7Z" fill="#b4b4b4"/></svg>
<div class="b" style="left:1px;top:996px;width:370px;height:13px;background:#474747;"></div>
<div class="b" style="left:1px;top:996px;width:13px;height:13px;background:#4b4b4b;border:1px solid #636363;"></div>
<div class="b" style="left:14px;top:996px;width:1px;height:13px;background:#2a2a2a;"></div>
<svg style="left:5px;top:998px" width="4" height="8" viewBox="0 0 4 8"><path d="M4 0L0 4L4 8Z" fill="#d8d8d8"/></svg>
<div class="b" style="left:358px;top:996px;width:13px;height:13px;background:#4b4b4b;border:1px solid #636363;"></div>
<div class="b" style="left:357px;top:996px;width:1px;height:13px;background:#2a2a2a;"></div>
<svg style="left:362.5px;top:998px" width="4" height="8" viewBox="0 0 4 8"><path d="M0 0L4 4L0 8Z" fill="#d8d8d8"/></svg>
<div class="b" style="left:14px;top:996px;width:1px;height:13px;background:#2a2a2a;"></div>
<div class="b" style="left:133px;top:996px;width:1px;height:13px;background:#2a2a2a;"></div>
<div class="b" style="left:15px;top:996px;width:118px;height:13px;background:#4d4d4d;border:1px solid #646464;"></div>
<div class="b" style="left:374px;top:957px;width:2px;height:2px;background:#6a6a6a;"></div>
<div class="b" style="left:374px;top:960px;width:2px;height:2px;background:#6a6a6a;"></div>
<div class="b" style="left:374px;top:963px;width:2px;height:2px;background:#6a6a6a;"></div>
<div class="b" style="left:374px;top:966px;width:2px;height:2px;background:#6a6a6a;"></div>
<div class="b" style="left:374px;top:969px;width:2px;height:2px;background:#6a6a6a;"></div>
<div class="b" style="left:374px;top:972px;width:2px;height:2px;background:#6a6a6a;"></div>
<div class="b" style="left:377px;top:919px;width:1529px;height:90px;background:#2d2d2d;"></div>
<div class="b" style="left:377px;top:919px;width:42px;height:90px;background:#232323;"></div>
<span class="m" style="left:384px;top:921px;color:#7d7d7d">0000</span>
<span class="m" style="left:426px;top:921px;color:#fff">00 e0 4c 36 38 5a c4 ad  34 71 ec 67 08 00 45 00</span>
<span class="m" style="left:783px;top:921px;color:#fff"><b>··</b>L68Z<b>··</b> 4q<b>·</b>g<b>··</b>E<b>·</b></span>
<span class="m" style="left:384px;top:936px;color:#7d7d7d">0010</span>
<span class="m" style="left:426px;top:936px;color:#fff">05 63 26 b4 40 00 3a 06  3f 90 92 4b 2e f8 0a 0a</span>
<span class="m" style="left:783px;top:936px;color:#fff"><b>·</b>c&amp;<b>·</b>@<b>·</b>:<b>·</b> ?<b>··</b>K.<b>···</b></span>
<span class="m" style="left:384px;top:951px;color:#7d7d7d">0020</span>
<span class="m" style="left:426px;top:951px;color:#fff">0a 04 01 bb c7 b3 67 f2  58 f1 c7 18 14 fe 50 18</span>
<span class="m" style="left:783px;top:951px;color:#fff"><b>······</b>g<b>·</b> X<b>·····</b>P<b>·</b></span>
<span class="m" style="left:384px;top:966px;color:#7d7d7d">0030</span>
<span class="m" style="left:426px;top:966px;color:#fff">01 2d 11 47 00 00 90 d8  4c 8a 65 91 30 89 e3 18</span>
<span class="m" style="left:783px;top:966px;color:#fff"><b>·</b>-<b>·</b>G<b>····</b> L<b>·</b>e<b>·</b>0<b>···</b></span>
<span class="m" style="left:384px;top:981px;color:#7d7d7d">0040</span>
<span class="m" style="left:426px;top:981px;color:#fff">c6 74 54 6d fb d0 66 0e  37 dd e3 16 55 3a 97 10</span>
<span class="m" style="left:783px;top:981px;color:#fff"><b>·</b>tTm<b>··</b>f<b>·</b> 7<b>···</b>U:<b>··</b></span>
<span class="m" style="left:384px;top:996px;color:#7d7d7d">0050</span>
<span class="m" style="left:426px;top:996px;color:#fff">d6 42 8c 6e 05 c8 41 f6  07 8a bd 11 4c bb 64 cd</span>
<span class="m" style="left:783px;top:996px;color:#fff"><b>·</b>B<b>·</b>n<b>··</b>A<b>·</b> <b>····</b>L<b>·</b>d<b>·</b></span>
<div class="b" style="left:1905px;top:919px;width:1px;height:90px;background:#262626;"></div>
<div class="b" style="left:1906px;top:919px;width:13px;height:90px;background:#474747;"></div>
<div class="b" style="left:1919px;top:919px;width:1px;height:90px;background:#303030;"></div>
<div class="b" style="left:1906px;top:919px;width:13px;height:13px;background:#4b4b4b;border:1px solid #636363;"></div>
<div class="b" style="left:1906px;top:932px;width:13px;height:1px;background:#2a2a2a;"></div>
<svg style="left:1908.5px;top:923px" width="8" height="4.4" viewBox="0 0 8 4.4"><path d="M0 4.4L4 0L8 4.4Z" fill="#d8d8d8"/></svg>
<div class="b" style="left:1906px;top:996px;width:13px;height:13px;background:#4b4b4b;border:1px solid #636363;"></div>
<div class="b" style="left:1906px;top:995px;width:13px;height:1px;background:#2a2a2a;"></div>
<svg style="left:1908.5px;top:1000px" width="8" height="4.4" viewBox="0 0 8 4.4"><path d="M0 0L4 4.4L8 0Z" fill="#d8d8d8"/></svg>
<div class="b" style="left:1906px;top:932px;width:13px;height:1px;background:#2a2a2a;"></div>
<div class="b" style="left:1906px;top:933px;width:13px;height:26px;background:#4d4d4d;border:1px solid #646464;"></div>
<div class="b" style="left:0px;top:1009px;width:1920px;height:23px;background:#1f1f1f;"></div>
<svg style="left:10px;top:1014px" width="14" height="14" viewBox="0 0 14 14"><defs><radialGradient id="yg" cx="0.4" cy="0.35" r="0.7"><stop offset="0" stop-color="#eef07a"/><stop offset="1" stop-color="#c8c84a"/></radialGradient></defs><circle cx="7" cy="7" r="6.5" fill="url(#yg)"/></svg>
<svg style="left:33px;top:1014px" width="14" height="15" viewBox="0 0 14 15"><rect x="1" y="2" width="10" height="12.5" fill="#ececec"/><rect x="1" y="2" width="10" height="3" fill="#5b9bd8"/><path d="M3 8H9M3 10.5H9M3 12.5H7" stroke="#b0b0b0" stroke-width="0.8"/><path d="M5 10L12 1.5L13.6 2.8L6.6 11.2L4.6 12Z" fill="#3a3a3a"/></svg>
<span id="status" class="t" style="left:63px;top:1015px;font-size:12px;letter-spacing:-0.044px;color:#fff;">Previous segment(s) not captured (common at capture start): Label</span>
<div class="b" style="left:1283px;top:1012px;width:1px;height:20px;background:#2e2e2e;"></div>
<div class="b" style="left:1287px;top:1012px;width:1px;height:20px;background:#2e2e2e;"></div>
<span id="pkts" class="t" style="left:1297px;top:1015px;font-size:12px;letter-spacing:-0.404px;color:#fff;">Packets: 485156 · Displayed: 11862 (2.4%)</span>
<div class="b" style="left:1825px;top:1012px;width:1px;height:20px;background:#2e2e2e;"></div>
<span id="profile" class="t" style="left:1838px;top:1015px;font-size:12px;letter-spacing:-0.044px;color:#fff;">Profile: Default</span>
</body></html>
